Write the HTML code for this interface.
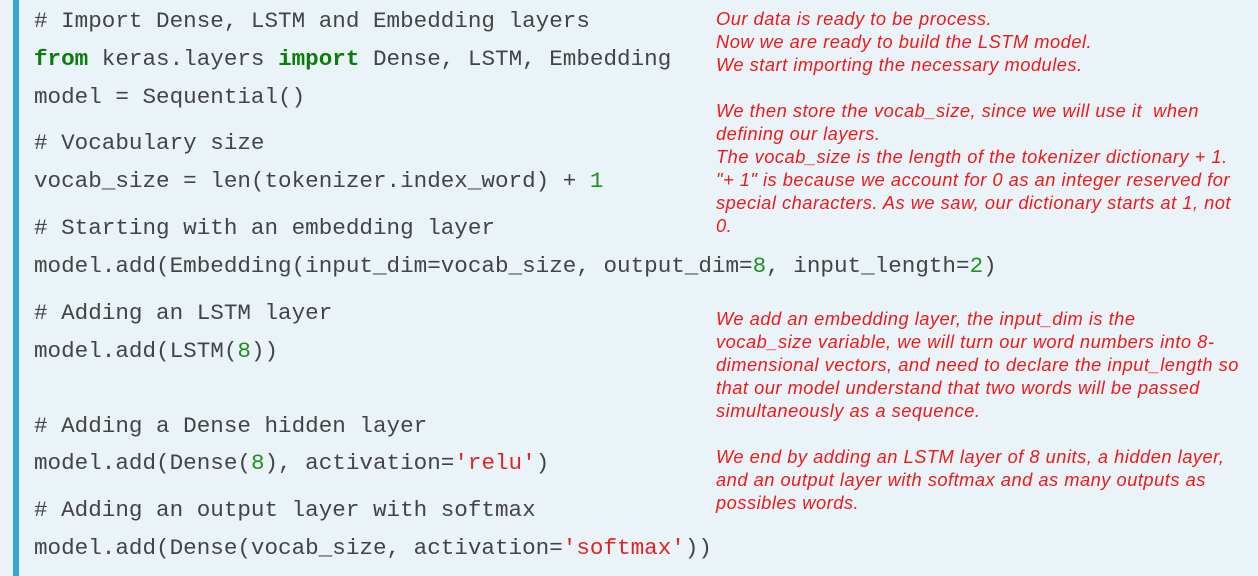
<!DOCTYPE html>
<html><head><meta charset="utf-8"><style>
html,body{margin:0;padding:0}
body{width:1258px;height:576px;background:#eaf3f7;position:relative;overflow:hidden}
.bar{position:absolute;left:13px;top:0;width:6px;height:576px;background:#31a7cf}
.c{position:absolute;left:34px;font-family:"Liberation Mono",monospace;font-size:22.6px;color:#444;white-space:pre;line-height:26px}
.k{color:#0a7d0a;font-weight:bold}
.n{color:#22901e}
.s{color:#e02424}
.r{position:absolute;left:716px;font-family:"Liberation Sans",sans-serif;font-style:italic;font-size:18.3px;letter-spacing:0.5px;color:#ee1a1a;white-space:pre;line-height:23px}
</style></head><body>
<div class="bar"></div>
<div class="c" style="top:8px"># Import Dense, LSTM and Embedding layers</div>
<div class="c" style="top:46px"><span class="k">from</span> keras.layers <span class="k">import</span> Dense, LSTM, Embedding</div>
<div class="c" style="top:84px">model = Sequential()</div>
<div class="c" style="top:130px"># Vocabulary size</div>
<div class="c" style="top:168px">vocab_size = len(tokenizer.index_word) + <span class="n">1</span></div>
<div class="c" style="top:215px"># Starting with an embedding layer</div>
<div class="c" style="top:253px">model.add(Embedding(input_dim=vocab_size, output_dim=<span class="n">8</span>, input_length=<span class="n">2</span>)</div>
<div class="c" style="top:300px"># Adding an LSTM layer</div>
<div class="c" style="top:338px">model.add(LSTM(<span class="n">8</span>))</div>
<div class="c" style="top:413px"># Adding a Dense hidden layer</div>
<div class="c" style="top:450px">model.add(Dense(<span class="n">8</span>), activation=<span class="s">'relu'</span>)</div>
<div class="c" style="top:497px"># Adding an output layer with softmax</div>
<div class="c" style="top:535px">model.add(Dense(vocab_size, activation=<span class="s">'softmax'</span>))</div>

<div class="r" style="top:7px">Our data is ready to be process.
Now we are ready to build the LSTM model.
We start importing the necessary modules.

We then store the vocab_size, since we will use it  when
defining our layers.
The vocab_size is the length of the tokenizer dictionary + 1.
"+ 1" is because we account for 0 as an integer reserved for
special characters. As we saw, our dictionary starts at 1, not
0.</div>
<div class="r" style="top:307px">We add an embedding layer, the input_dim is the
vocab_size variable, we will turn our word numbers into 8-
dimensional vectors, and need to declare the input_length so
that our model understand that two words will be passed
simultaneously as a sequence.

We end by adding an LSTM layer of 8 units, a hidden layer,
and an output layer with softmax and as many outputs as
possibles words.</div>
</body></html>
